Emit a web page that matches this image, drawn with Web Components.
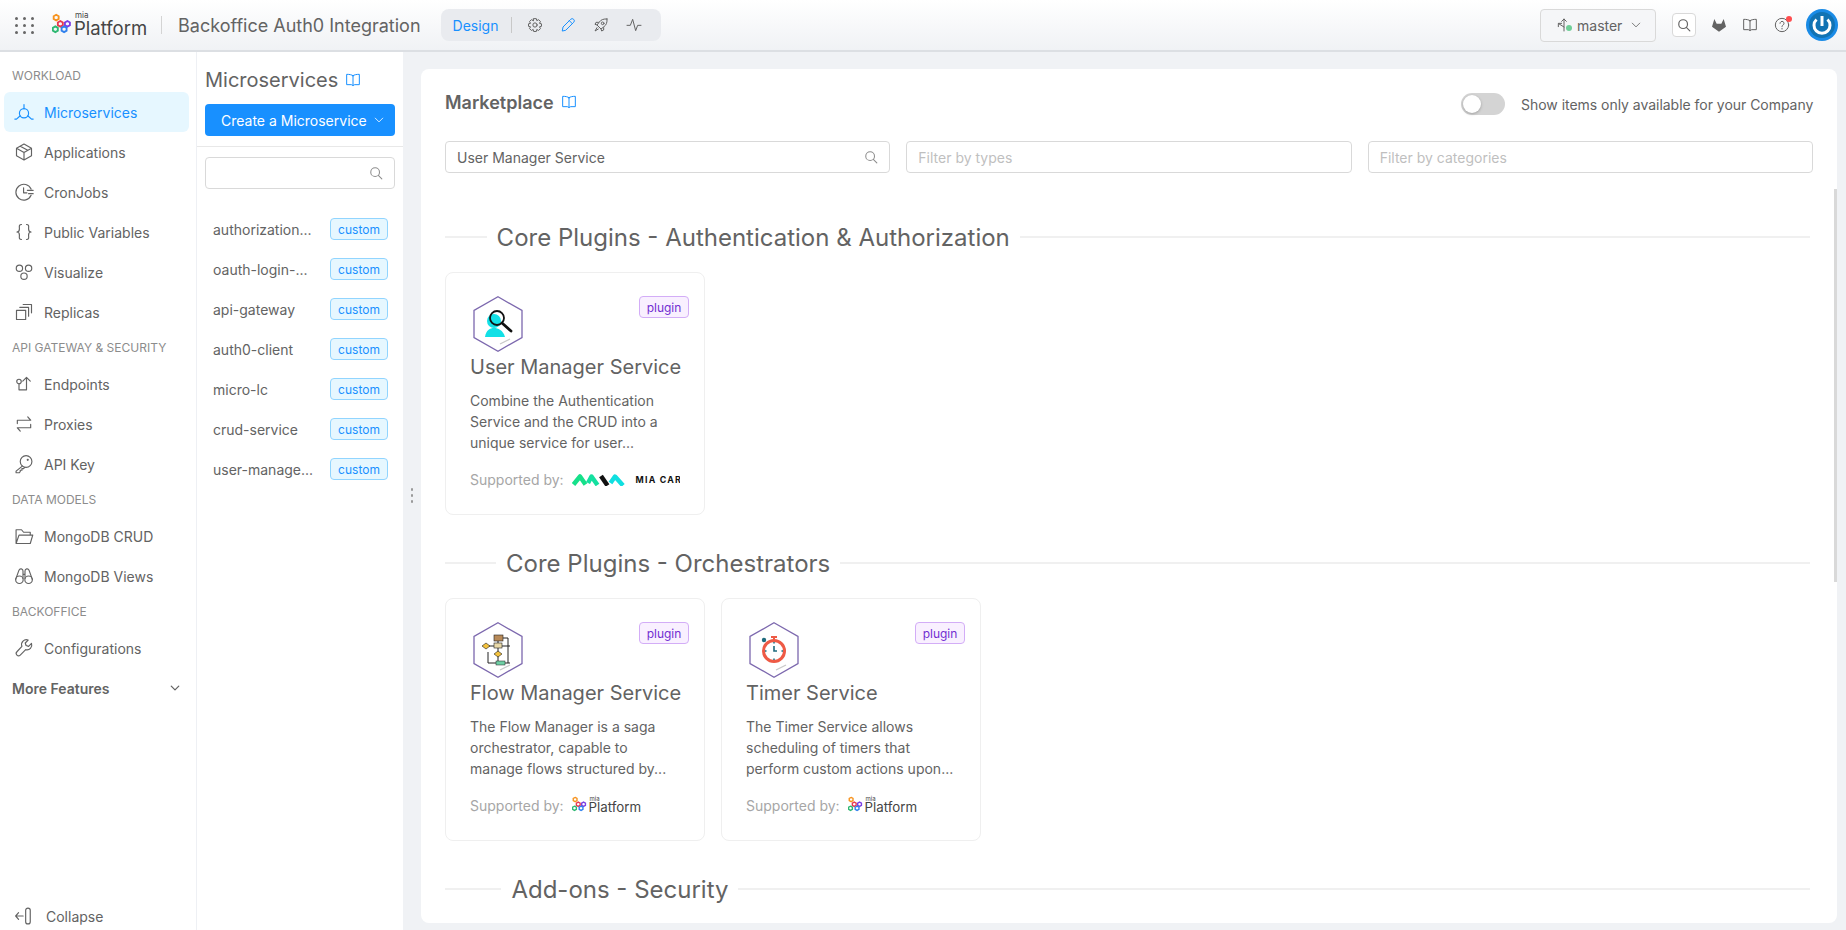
<!DOCTYPE html>
<html lang="en">
<head>
<meta charset="utf-8">
<title>Backoffice Auth0 Integration</title>
<style>
  html, body { margin: 0; height: 100%; overflow: hidden; }
  body { font-family: Inter, "Noto Sans", sans-serif; color: #636363; background: #f0f2f5; }
</style>
</head>
<body>
<mia-app></mia-app>
<script>
const ICONS = {
  micro: '<circle cx="12" cy="13.500" r="5.500"/><path d="M12 8V3M7.500 16.500L3 20.500H1M16.500 16.500l4.500 4H23"/>',
  cube: '<path d="M12 2.500l9 5v9l-9 5-9-5v-9zM3 7.500l9 5 9-5M12 12.500v9M7.500 5l9 5"/>',
  cron: '<path d="M20.500 8.500A9.500 9.500 0 1 0 20.500 16M11.500 7v6h4M16 10h7M17.500 14H23"/>',
  braces: '<path d="M9 3C5.500 3 6.500 6 6.500 8.500S6 12 3.500 12C6 12 6.500 13 6.500 15.500S5.500 21 9 21M15 3c3.500 0 2.500 3 2.500 5.500S18 12 20.500 12c-2.500 0-3 1-3 3.500s1 5.500-2.500 5.500"/>',
  visual: '<circle cx="6.500" cy="7.500" r="3.800"/><circle cx="17.500" cy="7.500" r="3.800"/><circle cx="12" cy="17" r="3.800"/>',
  replicas: '<rect x="3" y="10" width="11" height="11"/><path d="M7 6.500h10.500V17M11 3h10v10"/>',
  endpoints: '<circle cx="6" cy="9" r="2.700"/><path d="M6 11.700V19h9V4M10.500 8.500L15 4l4.500 4.500"/>',
  proxies: '<path d="M4 11.500V7.500h16M16.500 3.500l3.500 4M20 12.500v4H4M7.500 20.500l-3.500-4"/>',
  key: '<circle cx="14.500" cy="9" r="7"/><path d="M10 14.500L2.500 20.500V22.500H6.500L7.500 21V19.500H9.500V17.500H11.500L13 16"/><circle cx="16.500" cy="7" r=".6"/>',
  folder: '<path d="M2.500 21V4.500H9L11.500 7.500H19.500V11M2.500 21H19.500L22.500 11H6L2.500 21Z"/>',
  binoculars: '<circle cx="6.500" cy="16.500" r="4.500"/><circle cx="17.500" cy="16.500" r="4.500"/><path d="M2 16L6 5a2.500 2.500 0 0 1 4.800 1V15M22 16L18 5a2.500 2.500 0 0 0-4.800 1V15M10.800 10h2.400"/>',
  wrench: '<path d="M21 6.500l-3.500 3.500-3-1-1-3L17 2.500a5.800 5.800 0 0 0-7.500 7.500L3.500 16.500a2.800 2.800 0 0 0 4 4L14 14a5.800 5.800 0 0 0 7-7.500z"/>',
  collapse: '<path d="M11 12H2M5.500 8L2 12l3.500 4"/><rect x="14" y="2.500" width="5.500" height="19" rx="2.700"/>',
  book: '<path d="M12 5.500C10 4 6.500 3.500 2.500 3.500V19H9C10.500 19 12 20 12 21 12 20 13.500 19 15 19H21.500V3.500C17.500 3.500 14 4 12 5.500ZM12 5.500V20.500"/>',
  gear: '<circle cx="12" cy="12" r="3.200"/><path d="M10 2.500h4l.7 3 2.700-1.500 2.800 2.800L18.700 9.500l3 .7v3.800l-3 .7 1.500 2.700-2.800 2.800-2.700-1.500-.7 3h-4l-.7-3-2.700 1.500-2.800-2.800 1.500-2.700-3-.7v-3.800l3-.7L3.800 6.800 6.600 4l2.700 1.500z"/>',
  pencil: '<path d="M3.500 20.500l1-5.500L16 3.500a2.800 2.800 0 0 1 4.500 4.500L9 19.500zM14 5.500l4.500 4.500"/>',
  rocket: '<path d="M21 3c-5-.5-9 1-11.500 4.500L6 12l6 6 4.500-3.500C20 12 21.500 8 21 3z"/><circle cx="14.500" cy="9.500" r="2"/><path d="M8 8H4.500L3 11l3 1M16 16v3.500L13 21l-1-3M6 16l-3 5 5-3"/>',
  pulse: '<path d="M1.500 12.500h5L10 3.500l4.500 17 3-8h5"/>',
  search: '<circle cx="10.500" cy="10.500" r="7.500"/><path d="M16 16l6 6"/>',
  branch: '<path d="M12 21V3M8.500 6.500L12 3l3.500 3.500M12 15L4 10M3.500 14.500V9.500H8.500"/>',
  chevron: '<path d="M3 7.500l9 9 9-9"/>',
  help: '<circle cx="12" cy="12" r="10"/><path d="M9 9.500a3 3 0 1 1 4.500 2.600c-1 .6-1.500 1.200-1.500 2.400M12 17v1"/>'
};

class MiaIcon extends HTMLElement {
  connectedCallback() {
    const size = this.getAttribute('size') || 20;
    const stroke = this.getAttribute('stroke') || 1.5;
    const shadow = this.attachShadow({mode: 'open'});
    shadow.innerHTML = `<style>
      :host { display: inline-flex; flex: none; width: ${size}px; height: ${size}px; }
      svg { width: 100%; height: 100%; fill: none; stroke: currentColor; stroke-width: ${stroke}; stroke-linecap: round; stroke-linejoin: round; }
    </style><svg viewBox="0 0 24 24">${ICONS[this.getAttribute('name')] || ''}</svg>`;
  }
}

class MiaLogo extends HTMLElement {
  connectedCallback() {
    const small = this.hasAttribute('small');
    const shadow = this.attachShadow({mode: 'open'});
    shadow.innerHTML = `<style>
      :host { display: inline-flex; align-items: flex-end; gap: 2px; color: #454545; }
      svg { width: ${small ? 15 : 20}px; height: ${small ? 16 : 21}px; margin: 0 0 ${small ? 3 : 4}px ${small ? 0 : 1}px; flex: none; fill: none; stroke-width: 2.200; }
      .word { display: flex; flex-direction: column; font-weight: 400; line-height: 1; font-size: ${small ? 13.300 : 18.500}px; }
      .mia { font-size: ${small ? 6 : 8}px; line-height: ${small ? 5 : 7}px; padding-left: 1px; }
    </style>
    <svg viewBox="0 0 24 24">
      <path stroke="#f7931e" d="M5 1.500l3 1.700v3.400L5 8.300 2 6.600V3.200z"/>
      <path stroke="#e8384f" d="M10 9l3 1.700v3.400L10 15.800l-3-1.700v-3.400z"/>
      <path stroke="#7b3fe4" d="M18.500 9l3 1.700v3.400l-3 1.700-3-1.700v-3.400z"/>
      <path stroke="#2eb872" d="M4 15.500l3 1.700v3.400l-3 1.700-3-1.700v-3.400z"/>
      <path stroke="#2f80ed" d="M14.500 15.500l3 1.700v3.400l-3 1.700-3-1.700v-3.400z"/>
    </svg>
    <span class="word"><span class="mia">mia</span><span>Platform</span></span>`;
  }
}

class MiaCareLogo extends HTMLElement {
  connectedCallback() {
    const shadow = this.attachShadow({mode: 'open'});
    shadow.innerHTML = `<style>
      :host { display: inline-flex; align-items: center; gap: 9px; width: 110px; overflow: hidden; color: #111; }
      svg { width: 55px; height: 13px; flex: none; }
      span { font-size: 8.800px; font-weight: 700; letter-spacing: 1.200px; white-space: nowrap; }
    </style>
    <svg viewBox="0 0 55 13" fill="none" stroke-width="4.500" stroke-linejoin="round">
      <path stroke="#16e08a" d="M1.500 11.500L8 3.500l5.500 8"/>
      <path stroke="#14e0a0" d="M16 10L19.500 3.500l6 8.500"/>
      <path stroke="#111" d="M29 3l6.500 9.500"/>
      <path stroke="#10dfe0" d="M38.500 10L43 3.500l8 9"/>
    </svg><span>MIA CARE</span>`;
  }
}

class MiaTag extends HTMLElement {
  connectedCallback() {
    const shadow = this.attachShadow({mode: 'open'});
    const purple = this.getAttribute('kind') === 'purple';
    shadow.innerHTML = `<style>
      :host { display: inline-flex; align-items: center; justify-content: center; box-sizing: border-box; height: 22px; width: ${purple ? 50 : 58}px;
        font-size: 12px; border-radius: 4px; flex: none;
        color: ${purple ? '#722ed1' : '#1890ff'};
        background: ${purple ? '#f9f0ff' : '#e6f7ff'};
        border: 1px solid ${purple ? '#d3adf7' : '#91d5ff'}; }
    </style><slot></slot>`;
  }
}

class MiaTopbar extends HTMLElement {
  connectedCallback() {
    const shadow = this.attachShadow({mode: 'open'});
    shadow.innerHTML = `<style>
      :host { display: flex; align-items: center; box-sizing: border-box; height: 52px; flex: none; padding: 0 8px 0 15px;
        background: linear-gradient(#ffffff, #f0f2f5); border-bottom: 2px solid #dcdfe3; }
      .apps { display: grid; grid-template-columns: repeat(3, 3px); gap: 4px 5px; margin-right: 17px; }
      .apps i { width: 3px; height: 3px; border-radius: 50%; background: #666; }
      mia-logo { width: 94px; white-space: nowrap; }
      .sep { width: 1px; height: 18px; background: #d4d4d4; margin: 0 16px; }
      .title { font-size: 18px; white-space: nowrap; margin-right: 20px; }
      .pill { display: flex; align-items: center; height: 32px; width: 220px; box-sizing: border-box; padding-left: 12px; background: #e9ebef; border-radius: 8px; }
      .pill .design { color: #1890ff; font-size: 14px; }
      .pill .bar { flex: none; width: 1px; height: 16px; background: #c8c8c8; margin: 0 15px 0 13px; }
      .pill mia-icon { margin-right: 17px; }
      .pill mia-icon:last-child { margin-right: 0; }
      .pill .on { color: #1890ff; }
      .spacer { flex: 1; }
      .branch { display: flex; align-items: center; box-sizing: border-box; width: 116px; height: 33px; padding: 0 14px 0 15px; gap: 5px; font-size: 14px;
        background: #f5f6f8; border: 1px solid #d9d9d9; border-radius: 4px; margin-right: 16px; }
      .branch .dot { width: 6px; height: 6px; border-radius: 50%; background: #6fcf97; margin: 6px 0 0 -11px; flex: none; }
      .branch .name { flex: 1; }
      .find { display: flex; align-items: center; justify-content: center; width: 24px; height: 24px; box-sizing: border-box; background: #fff; border: 1px solid #d9d9d9; border-radius: 4px; margin-right: 15px; }
      .act { position: relative; margin-right: 15px; display: flex; }
      .act.wide { margin-right: 16px; }
      .badge { position: absolute; top: -1px; right: -2px; width: 6px; height: 6px; background: #ff4d4f; border-radius: 50%; }
      .gitlab { width: 16px; height: 16px; fill: #636363; }
      .power { width: 32px; height: 32px; flex: none; margin-left: 1px; }
    </style>
    <div class="apps">${'<i></i>'.repeat(9)}</div>
    <mia-logo></mia-logo>
    <div class="sep"></div>
    <div class="title">Backoffice Auth0 Integration</div>
    <div class="pill">
      <span class="design">Design</span><span class="bar"></span>
      <mia-icon name="gear" size="16"></mia-icon>
      <mia-icon name="pencil" size="16" class="on"></mia-icon>
      <mia-icon name="rocket" size="16"></mia-icon>
      <mia-icon name="pulse" size="16"></mia-icon>
    </div>
    <div class="spacer"></div>
    <div class="branch"><mia-icon name="branch" size="16"></mia-icon><span class="dot"></span><span class="name">master</span><mia-icon name="chevron" size="10" stroke="2"></mia-icon></div>
    <div class="find"><mia-icon name="search" size="14" stroke="2"></mia-icon></div>
    <div class="act"><svg class="gitlab" viewBox="0 0 24 24"><path d="M12 22L1.500 14.500 5 3l3.500 7h7L19 3l3.500 11.500z"/></svg></div>
    <div class="act wide"><mia-icon name="book" size="16"></mia-icon></div>
    <div class="act"><mia-icon name="help" size="16"></mia-icon><span class="badge"></span></div>
    <svg class="power" viewBox="0 0 32 32">
      <circle cx="16" cy="16" r="16" fill="#1a8be6"/><circle cx="16" cy="16" r="13" fill="#1273b3"/>
      <path d="M10.500 10.500a8 8 0 1 0 11 0" fill="none" stroke="#fff" stroke-width="3"/>
      <path d="M16 7v10" stroke="#fff" stroke-width="3"/>
    </svg>`;
  }
}

class MiaNavSection extends HTMLElement {
  connectedCallback() {
    const shadow = this.attachShadow({mode: 'open'});
    shadow.innerHTML = `<style>
      :host { display: flex; align-items: center; box-sizing: border-box; height: 32px; padding: 0 0 2px 12px; font-size: 12px; color: #8c8c8c; white-space: nowrap; }
    </style><slot></slot>`;
  }
}

class MiaNavItem extends HTMLElement {
  connectedCallback() {
    const shadow = this.attachShadow({mode: 'open'});
    shadow.innerHTML = `<style>
      :host { display: flex; align-items: center; gap: 10px; height: 40px; margin: 0 7px 0 4px; padding-left: 10px; font-size: 14px; color: #636363; border-radius: 6px; white-space: nowrap; }
      :host([active]) { background: #e6f7ff; color: #1890ff; }
    </style><mia-icon name="${this.getAttribute('icon')}" size="20" stroke="1.400"></mia-icon><slot></slot>`;
  }
}

class MiaSidebar extends HTMLElement {
  connectedCallback() {
    const shadow = this.attachShadow({mode: 'open'});
    shadow.innerHTML = `<style>
      :host { display: flex; flex-direction: column; box-sizing: border-box; width: 197px; flex: none; background: #fff; border-right: 1px solid #eef0f4; padding-top: 8px; }
      .more { display: flex; align-items: center; justify-content: space-between; height: 40px; padding: 0 16px 0 12px; font-size: 14px; font-weight: 600; color: #636363; }
      .spacer { flex: 1; }
      .collapse { height: 28px; gap: 12px; }
    </style>
    <mia-nav-section>WORKLOAD</mia-nav-section>
    <mia-nav-item icon="micro" active>Microservices</mia-nav-item>
    <mia-nav-item icon="cube">Applications</mia-nav-item>
    <mia-nav-item icon="cron">CronJobs</mia-nav-item>
    <mia-nav-item icon="braces">Public Variables</mia-nav-item>
    <mia-nav-item icon="visual">Visualize</mia-nav-item>
    <mia-nav-item icon="replicas">Replicas</mia-nav-item>
    <mia-nav-section>API GATEWAY &amp; SECURITY</mia-nav-section>
    <mia-nav-item icon="endpoints">Endpoints</mia-nav-item>
    <mia-nav-item icon="proxies">Proxies</mia-nav-item>
    <mia-nav-item icon="key">API Key</mia-nav-item>
    <mia-nav-section>DATA MODELS</mia-nav-section>
    <mia-nav-item icon="folder">MongoDB CRUD</mia-nav-item>
    <mia-nav-item icon="binoculars">MongoDB Views</mia-nav-item>
    <mia-nav-section>BACKOFFICE</mia-nav-section>
    <mia-nav-item icon="wrench">Configurations</mia-nav-item>
    <div class="more"><span>More Features</span><mia-icon name="chevron" size="10" stroke="3"></mia-icon></div>
    <div class="spacer"></div>
    <mia-nav-item icon="collapse" class="collapse">Collapse</mia-nav-item>`;
  }
}

class MiaServiceRow extends HTMLElement {
  connectedCallback() {
    const shadow = this.attachShadow({mode: 'open'});
    shadow.innerHTML = `<style>
      :host { display: flex; align-items: center; justify-content: space-between; height: 40px; padding: 0 7px 0 8px; font-size: 14px; color: #636363; }
      .name { width: 104px; white-space: nowrap; }
    </style><span class="name"><slot></slot></span><mia-tag>custom</mia-tag>`;
  }
}

class MiaServicePanel extends HTMLElement {
  connectedCallback() {
    const shadow = this.attachShadow({mode: 'open'});
    shadow.innerHTML = `<style>
      :host { display: flex; flex-direction: column; box-sizing: border-box; width: 206px; flex: none; background: #fff; }
      .head { padding: 13px 8px 10px; border-bottom: 1px solid #e8e8e8; }
      .title { display: flex; align-items: center; gap: 7px; height: 30px; margin-bottom: 9px; font-size: 20px; white-space: nowrap; }
      .title mia-icon { color: #1890ff; }
      .create { display: flex; align-items: center; gap: 7px; height: 32px; padding-left: 16px; background: #1890ff; color: #fff; font-size: 14px; border-radius: 4px; }
      .search { display: flex; align-items: center; justify-content: flex-end; box-sizing: border-box; height: 32px; margin: 10px 8px 20px; padding-right: 11px; border: 1px solid #d9d9d9; border-radius: 4px; color: #8c8c8c; }
      .list { padding: 0 8px; }
    </style>
    <div class="head">
      <div class="title">Microservices <mia-icon name="book" size="16"></mia-icon></div>
      <div class="create">Create a Microservice <mia-icon name="chevron" size="10" stroke="2"></mia-icon></div>
    </div>
    <div class="search"><mia-icon name="search" size="14" stroke="1.800"></mia-icon></div>
    <div class="list">
      <mia-service-row>authorization...</mia-service-row>
      <mia-service-row>oauth-login-...</mia-service-row>
      <mia-service-row>api-gateway</mia-service-row>
      <mia-service-row>auth0-client</mia-service-row>
      <mia-service-row>micro-lc</mia-service-row>
      <mia-service-row>crud-service</mia-service-row>
      <mia-service-row>user-manage...</mia-service-row>
    </div>`;
  }
}

class MiaSectionTitle extends HTMLElement {
  connectedCallback() {
    const shadow = this.attachShadow({mode: 'open'});
    shadow.innerHTML = `<style>
      :host { display: flex; align-items: center; height: 34px; margin-bottom: 18px; font-size: 24px; white-space: nowrap; }
      i { height: 2px; background: #f0f0f0; }
      .before { flex: 5 1 0; }
      .after { flex: 95 1 0; }
      span { padding: 0 10px; }
    </style><i class="before"></i><span><slot></slot></span><i class="after"></i>`;
  }
}

const PLUGIN_ART = {
  user: `<circle cx="24" cy="25" r="7" fill="#12e0e6"/><path d="M15 41c1-7 5-9 9-9s9 2 11 9z" fill="#12e0e6"/>
    <circle cx="27" cy="22" r="7" fill="none" stroke="#111" stroke-width="1.800"/><path d="M32 27l9 8" stroke="#111" stroke-width="2.800" stroke-linecap="round"/>`,
  flow: `<g stroke="#222" stroke-width="1" fill="none"><path d="M28 15v27M28 16h10v25M16 24h24M18 41h22M18 30v11"/></g>
    <rect x="24" y="13" width="9" height="6" fill="#b88a58" stroke="#222" stroke-width=".6"/><rect x="24" y="21" width="8" height="5" fill="#e9d9a8" stroke="#222" stroke-width=".6"/>
    <path d="M12 24l4-3 4 3-4 3zM24 32l4-3 4 3-4 3z" fill="#f4c23c" stroke="#222" stroke-width=".6"/><rect x="26" y="39" width="9" height="4" fill="#6fcfa5" stroke="#222" stroke-width=".5"/>`,
  timer: `<circle cx="28" cy="29" r="10.500" fill="none" stroke="#ee5a45" stroke-width="3"/><path d="M25 15h6M28 15v4" stroke="#ee5a45" stroke-width="2"/><circle cx="18" cy="18" r="2.200" fill="#1f6b7d"/>
    <path d="M28 24v5h3" stroke="#1f6b7d" stroke-width="1.600" fill="none"/><path d="M28 20v1.500M28 36.500V38M19 29h1.500M35.500 29H37" stroke="#1f6b7d" stroke-width="1.500"/>`
};

class MiaPluginIcon extends HTMLElement {
  connectedCallback() {
    const shadow = this.attachShadow({mode: 'open'});
    shadow.innerHTML = `<style>
      :host { display: block; width: 56px; height: 56px; flex: none; }
      svg { display: block; width: 100%; height: 100%; }
    </style><svg viewBox="0 0 56 56">
      <path d="M28 .8L52 14.500V41.500L28 55.200 4 41.500V14.500Z" fill="#fff" stroke="#7c68ae" stroke-width="1.300"/>
      ${PLUGIN_ART[this.getAttribute('art')]}
      <path d="M30 48l10-5" stroke="#c9c9c9" stroke-width="1.300"/>
    </svg>`;
  }
}

class MiaPluginCard extends HTMLElement {
  connectedCallback() {
    const shadow = this.attachShadow({mode: 'open'});
    const logo = this.getAttribute('vendor') === 'care' ? '<mia-care-logo></mia-care-logo>' : '<mia-logo small></mia-logo>';
    shadow.innerHTML = `<style>
      :host { display: flex; flex-direction: column; box-sizing: border-box; width: 260px; height: 243px; padding: 23px 24px; border: 1px solid #efefef; border-radius: 8px; background: #fff; flex: none; }
      .top { display: flex; justify-content: space-between; align-items: flex-start; margin-right: -9px; }
      .title { font-size: 20px; line-height: 30px; white-space: nowrap; }
      .desc { margin-top: 8px; font-size: 14px; line-height: 21px; }
      .foot { display: flex; align-items: center; height: 22px; margin-top: 15px; gap: 8px; font-size: 14px; color: #a6a6a6; white-space: nowrap; overflow: hidden; }
    </style>
    <div class="top"><mia-plugin-icon art="${this.getAttribute('art')}"></mia-plugin-icon><mia-tag kind="purple">plugin</mia-tag></div>
    <div class="title">${this.getAttribute('name')}</div>
    <div class="desc"><slot></slot></div>
    <div class="foot">Supported by: ${logo}</div>`;
  }
}

class MiaFilter extends HTMLElement {
  connectedCallback() {
    const shadow = this.attachShadow({mode: 'open'});
    const value = this.hasAttribute('value');
    shadow.innerHTML = `<style>
      :host { display: flex; align-items: center; justify-content: space-between; flex: 1 1 0; box-sizing: border-box; height: 32px; padding: 0 11px; border: 1px solid #d9d9d9; border-radius: 4px; font-size: 14px; color: ${value ? '#636363' : '#bfbfbf'}; }
      mia-icon { color: #8c8c8c; }
    </style><span><slot></slot></span>${value ? '<mia-icon name="search" size="14" stroke="1.800"></mia-icon>' : ''}`;
  }
}

class MiaMarketplace extends HTMLElement {
  connectedCallback() {
    const shadow = this.attachShadow({mode: 'open'});
    shadow.innerHTML = `<style>
      :host { display: flex; flex-direction: column; position: relative; flex: 1; min-width: 0; box-sizing: border-box; margin: 17px 9px 7px 18px; padding: 24px 24px 0; background: #fff; border-radius: 8px; overflow: hidden; }
      .head { display: flex; align-items: center; height: 22px; }
      .heading { display: flex; align-items: center; gap: 7px; margin-top: -4px; }
      .name { font-size: 18px; font-weight: 600; }
      .heading mia-icon { color: #1890ff; }
      .spacer { flex: 1; }
      .switch { position: relative; flex: none; width: 44px; height: 22px; background: #d4d4d4; border-radius: 11px; margin-right: 16px; }
      .switch::before { content: ''; position: absolute; left: 2px; top: 2px; width: 18px; height: 18px; background: #fff; border-radius: 50%; box-shadow: 0 1px 3px rgba(0,0,0,.25); }
      .label { width: 292px; font-size: 14px; letter-spacing: -.03px; white-space: nowrap; }
      .filters { display: flex; gap: 16px; margin-top: 26px; margin-bottom: 47px; }
      .content { padding-right: 3px; }
      .row { display: flex; gap: 16px; margin-bottom: 31px; }
      .scroll { position: absolute; top: 120px; right: 0; width: 3px; height: 393px; background: #d9d9d9; }
    </style>
    <div class="head">
      <div class="heading"><span class="name">Marketplace</span><mia-icon name="book" size="16"></mia-icon></div>
      <span class="spacer"></span><span class="switch"></span><span class="label">Show items only available for your Company</span>
    </div>
    <div class="filters">
      <mia-filter value>User Manager Service</mia-filter>
      <mia-filter>Filter by types</mia-filter>
      <mia-filter>Filter by categories</mia-filter>
    </div>
    <div class="content">
      <mia-section-title>Core Plugins - Authentication &amp; Authorization</mia-section-title>
      <div class="row">
        <mia-plugin-card name="User Manager Service" art="user" vendor="care">Combine the Authentication Service and the CRUD into a unique service for user...</mia-plugin-card>
      </div>
      <mia-section-title>Core Plugins - Orchestrators</mia-section-title>
      <div class="row">
        <mia-plugin-card name="Flow Manager Service" art="flow">The Flow Manager is a saga orchestrator, capable to manage flows structured by...</mia-plugin-card>
        <mia-plugin-card name="Timer Service" art="timer">The Timer Service allows scheduling of timers that perform custom actions upon...</mia-plugin-card>
      </div>
      <mia-section-title>Add-ons - Security</mia-section-title>
    </div>
    <div class="scroll"></div>`;
  }
}

class MiaHandle extends HTMLElement {
  connectedCallback() {
    const shadow = this.attachShadow({mode: 'open'});
    shadow.innerHTML = `<style>
      :host { position: absolute; left: 411px; top: 488px; display: grid; gap: 3px; }
      i { width: 2px; height: 3px; background: #999; border-radius: 1px; }
    </style><i></i><i></i><i></i>`;
  }
}

class MiaApp extends HTMLElement {
  connectedCallback() {
    const shadow = this.attachShadow({mode: 'open'});
    shadow.innerHTML = `<style>
      :host { display: flex; flex-direction: column; width: 100%; height: 930px; overflow: hidden; position: relative; background: #f0f2f5; }
      .body { display: flex; flex: 1; min-height: 0; }
    </style>
    <mia-topbar></mia-topbar>
    <div class="body">
      <mia-sidebar></mia-sidebar>
      <mia-service-panel></mia-service-panel>
      <mia-marketplace></mia-marketplace>
    </div>
    <mia-handle></mia-handle>`;
  }
}

customElements.define('mia-icon', MiaIcon);
customElements.define('mia-logo', MiaLogo);
customElements.define('mia-care-logo', MiaCareLogo);
customElements.define('mia-tag', MiaTag);
customElements.define('mia-topbar', MiaTopbar);
customElements.define('mia-nav-section', MiaNavSection);
customElements.define('mia-nav-item', MiaNavItem);
customElements.define('mia-sidebar', MiaSidebar);
customElements.define('mia-service-row', MiaServiceRow);
customElements.define('mia-service-panel', MiaServicePanel);
customElements.define('mia-section-title', MiaSectionTitle);
customElements.define('mia-plugin-icon', MiaPluginIcon);
customElements.define('mia-plugin-card', MiaPluginCard);
customElements.define('mia-filter', MiaFilter);
customElements.define('mia-marketplace', MiaMarketplace);
customElements.define('mia-handle', MiaHandle);
customElements.define('mia-app', MiaApp);
</script>
</body>
</html>
